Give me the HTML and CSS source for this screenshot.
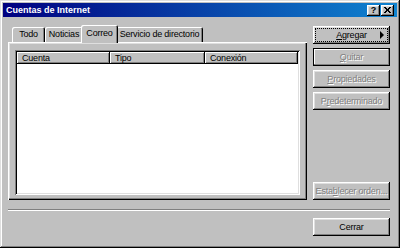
FILE: index.html
```html
<!DOCTYPE html>
<html lang="es">
<head>
  <meta charset="UTF-8" />
  <title>Cuentas de Internet</title>
  <link rel="stylesheet" href="styles.css">
</head>
<body>
  <div class="window">
    <!-- Title bar -->
    <div class="titlebar">
      <span class="titlebar__text">Cuentas de Internet</span>
      <div class="titlebar__buttons">
        <span class="tbtn tbtn--help">?</span>
        <span class="tbtn">
          <svg width="7" height="6" viewBox="0 0 7 6"><path d="M0 0h2v1h1v1h1v-1h1v-1h2v1h-1v1h-1v2h1v1h1v1h-2v-1h-1v-1h-1v1h-1v1h-2v-1h1v-1h1v-2h-1v-1h-1z" fill="#000"/></svg>
        </span>
      </div>
    </div>

    <div class="content">
      <div class="main">
        <!-- Tabs and account list -->
        <div class="tabs-area">
          <div class="tabs">
            <div class="tab tab--todo">Todo</div>
            <div class="tab tab--noticias">Noticias</div>
            <div class="tab tab--correo active">Correo</div>
            <div class="tab tab--servicio">Servicio de directorio</div>
          </div>
          <div class="panel">
            <div class="list">
              <div class="list__header">
                <div class="col col--cuenta">Cuenta</div>
                <div class="col col--tipo">Tipo</div>
                <div class="col col--conexion">Conexión</div>
              </div>
            </div>
          </div>
        </div>

        <!-- Side buttons -->
        <div class="side">
          <button class="btn btn--focus"><span class="btn__focus"><u>A</u>gregar</span><span class="btn__arrow"></span></button>
          <button class="btn btn--default" disabled><u>Q</u>uitar</button>
          <button class="btn" disabled><u>P</u>ropiedades</button>
          <button class="btn" disabled>P<u>r</u>edeterminado</button>
          <button class="btn btn--bottom" disabled>Esta<u>b</u>lecer orden...</button>
        </div>
      </div>

      <div class="separator"></div>

      <div class="footer">
        <button class="btn">Cerrar</button>
      </div>
    </div>
  </div>
</body>
</html>
```

FILE: styles.css
```css
* {
  box-sizing: border-box;
  margin: 0;
  padding: 0;
}

body {
  font-family: "Liberation Sans", Arial, sans-serif;
  font-size: 9px;
  letter-spacing: -0.2px;
  background-color: #c0c0c0;
  color: #000;
}

.window {
  width: 400px;
  height: 248px;
  padding: 3px;
  background-color: #c0c0c0;
  display: flex;
  flex-direction: column;
  box-shadow: inset -1px -1px #000, inset 1px 1px #dfdfdf, inset -2px -2px #808080, inset 2px 2px #fff;
}

/* Title bar */
.titlebar {
  height: 14px;
  padding: 0 3px 0 3px;
  display: flex;
  align-items: center;
  justify-content: space-between;
  background: linear-gradient(to right, #000080, #1084d0);
  color: #fff;
}

.titlebar__text {
  font-weight: bold;
  letter-spacing: 0;
}

.titlebar__buttons {
  display: flex;
  gap: 1px;
}

.tbtn {
  width: 13px;
  height: 11px;
  display: flex;
  align-items: center;
  justify-content: center;
  background-color: #c0c0c0;
  color: #000;
  font-weight: bold;
  font-size: 9px;
  box-shadow: inset -1px -1px #000, inset 1px 1px #fff, inset -2px -2px #808080, inset 2px 2px #dfdfdf;
}

.content {
  flex: 1;
  padding: 0 7px 0 5px;
  display: flex;
  flex-direction: column;
}

.main {
  display: flex;
  gap: 6px;
  margin-top: 8px;
}

/* Tabs */
.tabs-area {
  width: 299px;
  display: flex;
  flex-direction: column;
}

.tabs {
  height: 17px;
  padding-left: 4px;
  display: flex;
  align-items: flex-end;
}

.tab {
  height: 15px;
  line-height: 14px;
  text-align: center;
  white-space: nowrap;
  background-color: #c0c0c0;
  border-radius: 2px 2px 0 0;
  box-shadow: inset 1px 1px #fff, inset -1px 0 #000, inset -2px 0 #808080;
}

.tab--todo { width: 33px; }
.tab--noticias { width: 38px; }
.tab--correo { width: 33px; }
.tab--servicio { width: 87px; }

.tab.active {
  position: relative;
  z-index: 1;
  width: 37px;
  height: 18px;
  line-height: 16px;
  margin: 0 -2px -1px -2px;
}

.panel {
  height: 158px;
  padding: 8px 7px 5px 7px;
  box-shadow: inset 1px 1px #fff, inset -1px -1px #000, inset -2px -2px #808080, inset 2px 2px #dfdfdf;
}

.list {
  height: 100%;
  padding: 2px;
  background-color: #fff;
  box-shadow: inset 1px 1px #808080, inset -1px -1px #fff, inset 2px 2px #000, inset -2px -2px #dfdfdf;
}

.list__header {
  display: flex;
  height: 12px;
}

.col {
  padding-left: 5px;
  line-height: 12px;
  background-color: #c0c0c0;
  box-shadow: inset -1px -1px #000, inset 1px 1px #fff, inset -2px -2px #808080;
}

.col--cuenta { width: 93px; }
.col--tipo { width: 95px; }
.col--conexion { width: 93px; }

/* Buttons */
.side {
  width: 77px;
  padding-top: 1px;
  display: flex;
  flex-direction: column;
  gap: 4px;
}

.btn {
  position: relative;
  width: 77px;
  height: 18px;
  border: none;
  font: inherit;
  letter-spacing: inherit;
  color: #000;
  background-color: #c0c0c0;
  box-shadow: inset -1px -1px #000, inset 1px 1px #fff, inset -2px -2px #808080, inset 2px 2px #dfdfdf;
}

.btn:disabled {
  color: #808080;
  text-shadow: 1px 1px #fff;
}

.btn--default {
  box-shadow: inset 0 0 0 1px #000, inset -2px -2px #808080, inset 2px 2px #fff;
}

.btn--focus {
  padding: 3px;
}

.btn__focus {
  display: flex;
  align-items: center;
  justify-content: center;
  height: 100%;
  outline: 1px dotted #000;
}

.btn__arrow {
  position: absolute;
  right: 6px;
  top: 5px;
  width: 0;
  height: 0;
  border-top: 4px solid transparent;
  border-bottom: 4px solid transparent;
  border-left: 4px solid #000;
}

.btn--bottom {
  margin-top: auto;
}

.separator {
  margin-top: 9px;
  height: 2px;
  border-top: 1px solid #808080;
  border-bottom: 1px solid #fff;
}

.footer {
  margin-top: 7px;
  display: flex;
  justify-content: flex-end;
}
```
